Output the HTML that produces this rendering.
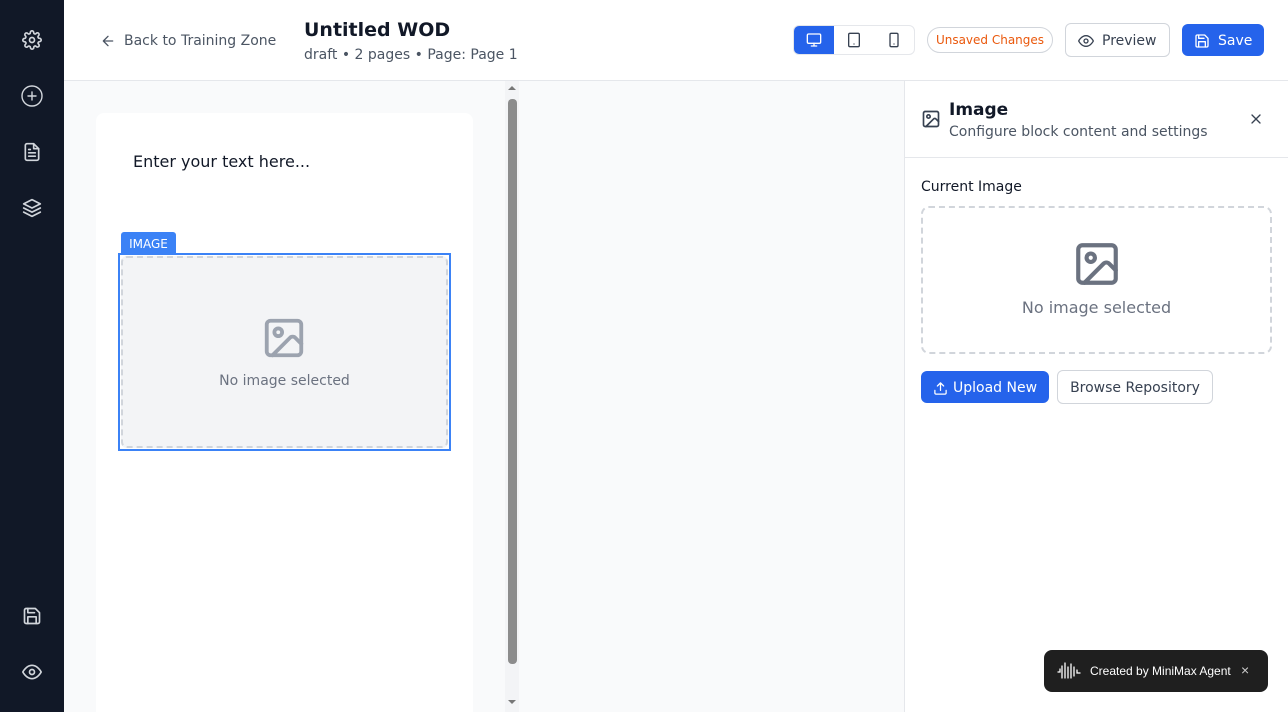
<!DOCTYPE html>
<html><head><style>
*{box-sizing:border-box;margin:0;padding:0}
html,body{width:1288px;height:712px;overflow:hidden}
body{font-family:"DejaVu Sans","Liberation Sans",sans-serif;background:#f9fafb;position:relative;color:#111827}
.abs{position:absolute}
.side{left:0;top:0;width:64px;height:712px;background:#111827}
.side svg{position:absolute;left:22px;width:20px;height:20px;fill:none;stroke:#d1d5db;stroke-width:2;stroke-linecap:round;stroke-linejoin:round}
.hdr{left:64px;top:0;width:1224px;height:81px;background:#fff;border-bottom:1px solid #e5e7eb}
.btn{position:absolute;border-radius:6px;font-size:14px;display:flex;align-items:center}
svg.i{fill:none;stroke-linecap:round;stroke-linejoin:round;stroke-width:2}
</style></head><body>
<div class="abs side">
<svg style="top:30px" viewBox="0 0 24 24"><circle cx="12" cy="12" r="3"/><path d="M19.4 15a1.7 1.7 0 0 0 .3 1.8l.1.1a2 2 0 1 1-2.8 2.8l-.1-.1a1.7 1.7 0 0 0-1.8-.3 1.7 1.7 0 0 0-1 1.5V21a2 2 0 1 1-4 0v-.1a1.7 1.7 0 0 0-1.1-1.5 1.7 1.7 0 0 0-1.8.3l-.1.1a2 2 0 1 1-2.8-2.8l.1-.1a1.7 1.7 0 0 0 .3-1.8 1.7 1.7 0 0 0-1.5-1H3a2 2 0 1 1 0-4h.1a1.7 1.7 0 0 0 1.5-1.1 1.7 1.7 0 0 0-.3-1.8l-.1-.1a2 2 0 1 1 2.8-2.8l.1.1a1.7 1.7 0 0 0 1.8.3H9a1.7 1.7 0 0 0 1-1.5V3a2 2 0 1 1 4 0v.1a1.7 1.7 0 0 0 1 1.5 1.7 1.7 0 0 0 1.8-.3l.1-.1a2 2 0 1 1 2.8 2.8l-.1.1a1.7 1.7 0 0 0-.3 1.8V9a1.7 1.7 0 0 0 1.5 1H21a2 2 0 1 1 0 4h-.1a1.7 1.7 0 0 0-1.5 1z"/></svg>
<svg style="top:84px;left:20px;width:24px;height:24px" viewBox="0 0 24 24"><circle cx="12" cy="12" r="10" stroke-width="1.4"/><path d="M12 8v8M8 12h8" stroke-width="1.4"/></svg>
<svg style="top:142px" viewBox="0 0 24 24"><path d="M14 2H6a2 2 0 0 0-2 2v16a2 2 0 0 0 2 2h12a2 2 0 0 0 2-2V8z"/><path d="M14 2v6h6M16 13H8M16 17H8M10 9H8"/></svg>
<svg style="top:198px" viewBox="0 0 24 24"><path d="M12 2 2 7l10 5 10-5-10-5zM2 17l10 5 10-5M2 12l10 5 10-5"/></svg>
<svg style="top:606px" viewBox="0 0 24 24"><path d="M19 21H5a2 2 0 0 1-2-2V5a2 2 0 0 1 2-2h11l5 5v11a2 2 0 0 1-2 2z"/><path d="M17 21v-8H7v8M7 3v5h8"/></svg>
<svg style="top:662px" viewBox="0 0 24 24"><path d="M1 12s4-8 11-8 11 8 11 8-4 8-11 8-11-8-11-8z"/><circle cx="12" cy="12" r="3"/></svg>
</div>
<div class="abs hdr">
<div class="abs" style="left:36px;top:33px;font-size:14px;color:#4b5563;display:flex;align-items:center;gap:8px"><svg class="i" width="16" height="16" viewBox="0 0 24 24" stroke="#4b5563"><path d="M19 12H5M12 19l-7-7 7-7"/></svg>Back to Training Zone</div>
<div class="abs" style="left:240px;top:19px;font-size:19px;font-weight:bold;color:#111827">Untitled WOD</div>
<div class="abs" style="left:240px;top:47px;font-size:14px;color:#4b5563">draft • 2 pages • Page: Page 1</div>
<div class="abs" style="left:729px;top:25px;width:122px;height:30px;border:1px solid #e5e7eb;border-radius:6px;overflow:hidden">
<div class="abs" style="left:0;top:0;width:40px;height:28px;background:#2563eb"></div>
<svg class="i abs" style="left:12px;top:6px" width="16" height="16" viewBox="0 0 24 24" stroke="#fff"><rect x="2" y="3" width="20" height="14" rx="2"/><path d="M8 21h8M12 17v4"/></svg>
<svg class="i abs" style="left:52px;top:6px" width="16" height="16" viewBox="0 0 24 24" stroke="#374151"><rect x="4" y="2" width="16" height="20" rx="2"/><path d="M12 18h.01"/></svg>
<svg class="i abs" style="left:92px;top:6px" width="16" height="16" viewBox="0 0 24 24" stroke="#374151"><rect x="6" y="2" width="12" height="20" rx="2"/><path d="M12 18h.01"/></svg>
</div>
<div class="abs" style="left:863px;top:27px;width:126px;height:26px;border:1px solid #d1d5db;border-radius:13px;font-size:12px;color:#ea580c;text-align:center;line-height:25px">Unsaved Changes</div>
<div class="btn" style="left:1001px;top:23px;width:105px;height:34px;border:1px solid #d1d5db;color:#374151;padding:2px 0 0 12px;gap:8px"><svg class="i" width="16" height="16" viewBox="0 0 24 24" stroke="#374151"><path d="M1 12s4-8 11-8 11 8 11 8-4 8-11 8-11-8-11-8z"/><circle cx="12" cy="12" r="3"/></svg>Preview</div>
<div class="btn" style="left:1118px;top:24px;width:82px;height:32px;background:#2563eb;color:#fff;padding:2px 0 0 12px;gap:8px"><svg class="i" width="16" height="16" viewBox="0 0 24 24" stroke="#fff"><path d="M19 21H5a2 2 0 0 1-2-2V5a2 2 0 0 1 2-2h11l5 5v11a2 2 0 0 1-2 2z"/><path d="M17 21v-8H7v8M7 3v5h8"/></svg>Save</div>
</div>
<div class="abs" style="left:96px;top:113px;width:377px;height:599px;background:#fff;border-radius:8px 8px 0 0"></div>
<div class="abs" style="left:133px;top:152px;font-size:16px;color:#111827">Enter your text here...</div>
<div class="abs" style="left:121px;top:232px;width:55px;height:22px;background:#3b82f6;color:#fff;font-size:12px;text-align:center;line-height:24px;border-radius:3px 3px 0 0">IMAGE</div>
<div class="abs" style="left:118px;top:253px;width:333px;height:198px;border:2px solid #3b82f6"></div>
<div class="abs" style="left:121px;top:256px;width:327px;height:192px;border:2px dashed #d1d5db;background:#f3f4f6;border-radius:6px"></div>
<svg class="i abs" style="left:261px;top:315px" width="46" height="46" viewBox="0 0 24 24" stroke="#9ca3af"><rect x="3" y="3" width="18" height="18" rx="2"/><circle cx="9" cy="9" r="2"/><path d="M21 15l-3.1-3.1a2 2 0 0 0-2.8 0L6 21"/></svg>
<div class="abs" style="left:121px;top:373px;width:327px;text-align:center;font-size:14px;color:#6b7280">No image selected</div>
<div class="abs" style="left:505px;top:81px;width:14px;height:631px;background:#f3f4f6"></div>
<div class="abs" style="left:508px;top:99px;width:9px;height:565px;background:#8c8c8c;border-radius:4px"></div>
<div class="abs" style="left:508px;top:86px;width:0;height:0;border:4px solid transparent;border-bottom:4px solid #777;border-top:0"></div>
<div class="abs" style="left:508px;top:700px;width:0;height:0;border:4px solid transparent;border-top:4px solid #777;border-bottom:0"></div>
<div class="abs" style="left:904px;top:81px;width:384px;height:631px;background:#fff;border-left:1px solid #e5e7eb"></div>
<div class="abs" style="left:905px;top:157px;width:383px;height:1px;background:#e5e7eb"></div>
<svg class="i abs" style="left:921px;top:109px" width="20" height="20" viewBox="0 0 24 24" stroke="#374151"><rect x="3" y="3" width="18" height="18" rx="2"/><circle cx="9" cy="9" r="2"/><path d="M21 15l-3.1-3.1a2 2 0 0 0-2.8 0L6 21"/></svg>
<div class="abs" style="left:949px;top:100px;font-size:17px;font-weight:bold">Image</div>
<div class="abs" style="left:949px;top:124px;font-size:14px;color:#4b5563">Configure block content and settings</div>
<svg class="i abs" style="left:1248px;top:111px" width="16" height="16" viewBox="0 0 24 24" stroke="#374151"><path d="M18 6 6 18M6 6l12 12"/></svg>
<div class="abs" style="left:921px;top:179px;font-size:14px;color:#111827">Current Image</div>
<div class="abs" style="left:921px;top:206px;width:351px;height:148px;border:2px dashed #d1d5db;border-radius:8px"></div>
<svg class="i abs" style="left:1072px;top:239px" width="50" height="50" viewBox="0 0 24 24" stroke="#6b7280"><rect x="3" y="3" width="18" height="18" rx="2"/><circle cx="9" cy="9" r="2"/><path d="M21 15l-3.1-3.1a2 2 0 0 0-2.8 0L6 21"/></svg>
<div class="abs" style="left:921px;top:298px;width:351px;text-align:center;font-size:16px;color:#6b7280">No image selected</div>
<div class="btn" style="left:921px;top:371px;width:128px;height:32px;background:#2563eb;color:#fff;padding:2px 0 0 12px;gap:5px"><svg class="i" width="15" height="15" viewBox="0 0 24 24" stroke="#fff"><path d="M21 15v4a2 2 0 0 1-2 2H5a2 2 0 0 1-2-2v-4M17 8l-5-5-5 5M12 3v12"/></svg>Upload New</div>
<div class="btn" style="left:1057px;top:370px;width:156px;height:34px;border:1px solid #d1d5db;color:#374151;justify-content:center;padding-top:2px">Browse Repository</div>
<div class="abs" style="left:1044px;top:650px;width:224px;height:42px;background:#1f1f1f;border-radius:8px;color:#fff;font-family:'Liberation Sans',sans-serif;font-size:12px">
<svg class="abs" style="left:13px;top:11px" width="26" height="20" viewBox="0 0 26 20" fill="none" stroke="#fff" stroke-width="1.3" stroke-linecap="round"><path d="M1 11h2v-3M5 5v12M8 2v15M11 6v11M14 3v14M17 6v9M20 9v3h3"/></svg>
<div class="abs" style="left:46px;top:14px">Created by MiniMax Agent</div>
<div class="abs" style="left:197px;top:12px;font-size:14px;color:#ccc">×</div>
</div>
</body></html>
